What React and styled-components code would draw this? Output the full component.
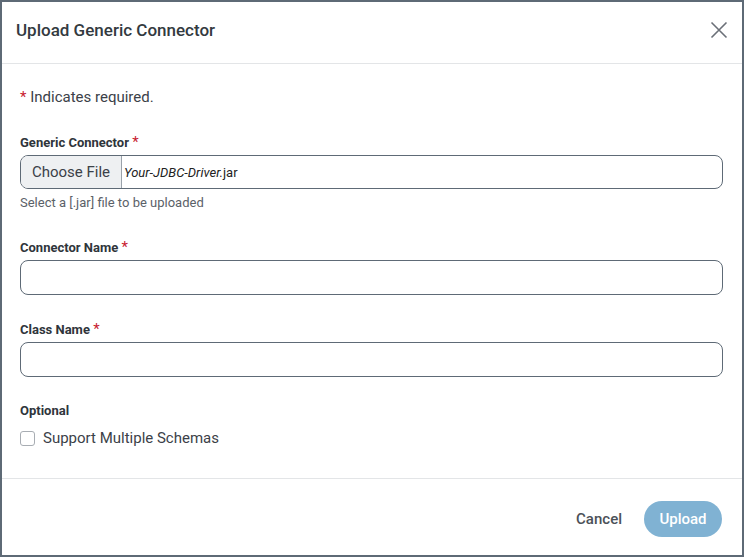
import React from "react";
import styled, { createGlobalStyle } from "styled-components";

const GlobalStyle = createGlobalStyle`
  html, body {
    margin: 0;
    padding: 0;
    background: #ffffff;
  }
  body {
    font-family: Roboto, "Liberation Sans", Arial, sans-serif;
    color: #333a40;
  }
`;

const Modal = styled.div`
  box-sizing: border-box;
  width: 744px;
  height: 557px;
  border: 2px solid #5e6a76;
  background: #fff;
  display: flex;
  flex-direction: column;
`;

const Header = styled.header`
  height: 62px;
  flex: none;
  display: flex;
  align-items: center;
  justify-content: space-between;
  padding: 0 12px 6px 14px;
  box-sizing: border-box;
  border-bottom: 1px solid #e3e5e7;
`;

const Title = styled.h2`
  margin: 0;
  font-size: 17px;
  font-weight: 500;
  line-height: 20px;
  color: #333a40;
`;

const CloseButton = styled.button`
  border: none;
  background: none;
  padding: 0;
  width: 22px;
  height: 22px;
  display: flex;
  align-items: center;
  justify-content: center;
  color: #6b7078;
  cursor: pointer;
`;

const Body = styled.div`
  flex: 1;
  padding: 24px 19px 0 18px;
  display: flex;
  flex-direction: column;
`;

const Required = styled.span`
  color: #c8202f;
`;

const Note = styled.p`
  margin: 0 0 28px 0;
  font-size: 15px;
  line-height: 18px;
  height: 18px;
  color: #3b4148;
`;

const Field = styled.div`
  display: flex;
  flex-direction: column;
  margin-bottom: ${(p) => p.$gap || 26}px;
`;

const Label = styled.label`
  display: block;
  height: 16px;
  font-size: 13px;
  font-weight: 700;
  line-height: 16px;
  color: #2f353b;
  margin-bottom: 5px;
  ${Required} {
    font-weight: 400;
    font-size: 15px;
    line-height: 16px;
  }
`;

const FileBox = styled.div`
  height: 34px;
  box-sizing: border-box;
  border: 1px solid #5e6a76;
  border-radius: 8px;
  display: flex;
  align-items: stretch;
  overflow: hidden;
`;

const ChooseButton = styled.span`
  width: 100px;
  flex: none;
  background: #eef0f2;
  border-right: 1px solid #9aa2aa;
  display: flex;
  align-items: center;
  justify-content: center;
  font-size: 15px;
  color: #3b4148;
`;

const FileName = styled.span`
  display: flex;
  align-items: center;
  padding-left: 2px;
  font-size: 13px;
  color: #222;
  em {
    font-style: italic;
  }
`;

const Help = styled.span`
  margin-top: 6px;
  font-size: 13px;
  line-height: 16px;
  color: #5b6168;
`;

const TextInput = styled.input`
  height: 35px;
  box-sizing: border-box;
  border: 1px solid #5e6a76;
  border-radius: 8px;
  padding: 0 10px;
  font-size: 14px;
  font-family: inherit;
  outline: none;
`;

const CheckRow = styled.label`
  display: flex;
  align-items: center;
  gap: 8px;
  margin-top: 5px;
  height: 18px;
  font-size: 15px;
  line-height: 18px;
  color: #3b4148;
`;

const Box = styled.span`
  width: 13px;
  height: 13px;
  border: 1px solid #a8adb3;
  border-radius: 3px;
  flex: none;
`;

const Footer = styled.footer`
  height: 77px;
  flex: none;
  border-top: 1px solid #e3e5e7;
  display: flex;
  align-items: center;
  justify-content: flex-end;
  gap: 22px;
  padding: 4px 20px 0 0;
  box-sizing: border-box;
`;

const Button = styled.button`
  font-family: inherit;
  font-size: 15px;
  font-weight: 500;
  border: none;
  cursor: pointer;
  height: 36px;
  border-radius: 18px;
  padding: ${(p) => (p.$primary ? "0 14px" : "0")};
  min-width: ${(p) => (p.$primary ? "78px" : "auto")};
  background: ${(p) => (p.$primary ? "#80b2d3" : "transparent")};
  color: ${(p) => (p.$primary ? "#ffffff" : "#4b5158")};
`;

function CloseIcon() {
  return (
    <svg width="18" height="18" viewBox="0 0 18 18" fill="none">
      <path d="M1.5 1.5 L16.5 16.5 M16.5 1.5 L1.5 16.5" stroke="currentColor" strokeWidth="1.6" />
    </svg>
  );
}

export default function App() {
  return (
    <>
      <GlobalStyle />
      <Modal>
        <Header>
          <Title>Upload Generic Connector</Title>
          <CloseButton aria-label="Close">
            <CloseIcon />
          </CloseButton>
        </Header>
        <Body>
          <Note>
            <Required>*</Required> Indicates required.
          </Note>
          <Field $gap={28}>
            <Label>
              Generic Connector <Required>*</Required>
            </Label>
            <FileBox>
              <ChooseButton>Choose File</ChooseButton>
              <FileName>
                <em>Your-JDBC-Driver.</em>jar
              </FileName>
            </FileBox>
            <Help>Select a [.jar] file to be uploaded</Help>
          </Field>
          <Field $gap={26}>
            <Label>
              Connector Name <Required>*</Required>
            </Label>
            <TextInput />
          </Field>
          <Field $gap={26}>
            <Label>
              Class Name <Required>*</Required>
            </Label>
            <TextInput />
          </Field>
          <Field $gap={0}>
            <Label>Optional</Label>
            <CheckRow>
              <Box />
              Support Multiple Schemas
            </CheckRow>
          </Field>
        </Body>
        <Footer>
          <Button>Cancel</Button>
          <Button $primary>Upload</Button>
        </Footer>
      </Modal>
    </>
  );
}
